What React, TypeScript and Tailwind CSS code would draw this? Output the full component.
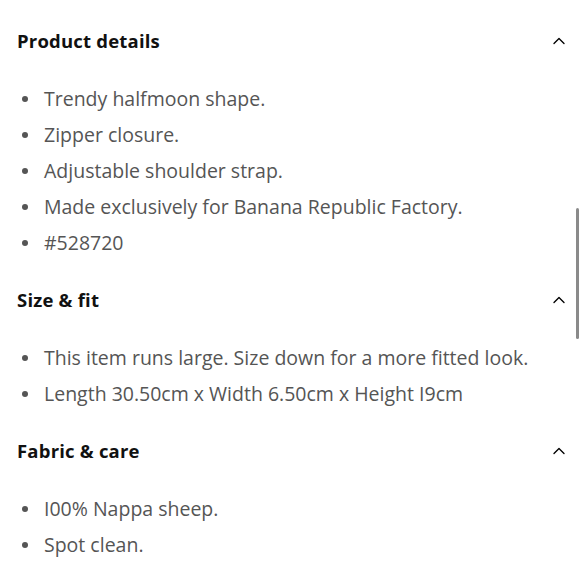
import { ChevronUp } from 'lucide-react'

const sections = [
  {
    title: 'Product details',
    items: [
      'Trendy halfmoon shape.',
      'Zipper closure.',
      'Adjustable shoulder strap.',
      'Made exclusively for Banana Republic Factory.',
      '#528720',
    ],
  },
  {
    title: 'Size & fit',
    items: [
      'This item runs large. Size down for a more fitted look.',
      'Length 30.50cm x Width 6.50cm x Height I9cm',
    ],
  },
  {
    title: 'Fabric & care',
    items: ['I00% Nappa sheep.', 'Spot clean.'],
  },
]

export default function App() {
  return (
    <div className="relative h-[580px] w-[580px] overflow-hidden bg-white font-['Open_Sans',sans-serif]">
      <div className="flex flex-col pt-[28.5px] pl-[17px] pr-[11px]">
        {sections.map((section) => (
          <section key={section.title} className="mb-[27.25px]">
            <div className="flex h-6 items-center justify-between">
              <h2 className="text-[18.5px] font-bold tracking-[0.2px] text-[#111]">{section.title}</h2>
              <ChevronUp className="h-5 w-5 text-black" strokeWidth={1.6} />
            </div>
            <ul className="mt-[28px] flex flex-col">
              {section.items.map((item) => (
                <li key={item} className="flex h-9 items-center text-[19.5px] text-[#555]">
                  <span className="mr-[16px] ml-[5px] h-[6px] w-[6px] shrink-0 rounded-full bg-[#555]" />
                  {item}
                </li>
              ))}
            </ul>
          </section>
        ))}
      </div>
      {/* scrollbar */}
      <div className="absolute top-[208px] right-[1px] h-[131px] w-[3px] rounded-full bg-[#8a8a8a]" />
    </div>
  )
}
